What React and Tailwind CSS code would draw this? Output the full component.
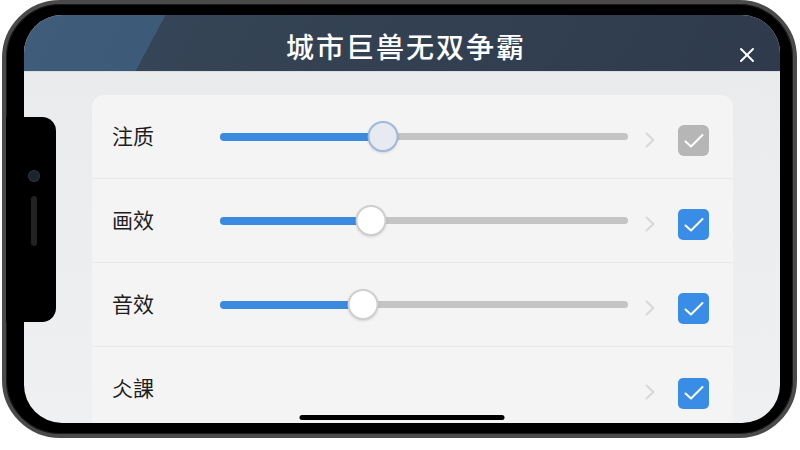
import { X } from 'lucide-react'

const rows = [
  { label: '注质', value: 40, active: true, checked: false },
  { label: '画效', value: 37, active: false, checked: true },
  { label: '音效', value: 35, active: false, checked: true },
  { label: '仌課', value: null, active: false, checked: true },
]

function Slider({ value, active }) {
  return (
    <div className="relative flex h-[30px] w-[408px] items-center">
      <div className="h-[7px] w-full rounded-full bg-[#c4c4c4]" />
      <div
        className="absolute left-0 h-[8px] rounded-full bg-[#3a8ae0]"
        style={{ width: `${value}%` }}
      />
      <div
        className={
          active
            ? 'absolute h-[31px] w-[31px] -translate-x-1/2 rounded-full border-2 border-[#9fb9d8] bg-[#e7ebf1] shadow-sm'
            : 'absolute h-[31px] w-[31px] -translate-x-1/2 rounded-full border-2 border-[#cfcfcf] bg-white shadow-sm'
        }
        style={{ left: `${value}%` }}
      />
    </div>
  )
}

function Check({ checked }) {
  return (
    <span
      className={
        checked
          ? 'grid h-[31px] w-[31px] translate-y-[4px] place-items-center rounded-[5px] bg-[#3a8de6]'
          : 'grid h-[31px] w-[31px] translate-y-[4px] place-items-center rounded-[6px] bg-[#b6b6b6]'
      }
    >
      <svg width="24" height="24" viewBox="0 0 24 24" fill="none">
        <path d="M3.5 12.5l5.5 5L20.5 6" stroke="white" strokeWidth="2" strokeLinecap="round" strokeLinejoin="round" />
      </svg>
    </span>
  )
}

function Row({ label, value, active, checked, last }) {
  return (
    <div className={last ? 'flex h-[84px] items-center pl-[20px] pr-[24px]' : 'flex h-[84px] items-center border-b border-[#e8e8e8] pl-[20px] pr-[24px]'}>
      <span className="w-[108px] -translate-y-[1px] text-[21px] text-[#1e1e1e]">{label}</span>
      {value !== null ? <Slider value={value} active={active} /> : <div className="w-[408px]" />}
      <svg className="ml-[17px] translate-y-[3px]" width="10" height="16" viewBox="0 0 10 16" fill="none">
        <path d="M1.5 1.5l7 6.5-7 6.5" stroke="#d6d6d6" strokeWidth="1.8" strokeLinecap="round" strokeLinejoin="round" />
      </svg>
      <div className="ml-[23px]">
        <Check checked={checked} />
      </div>
    </div>
  )
}

export default function App() {
  return (
    <div className="h-[450px] w-[800px] overflow-hidden bg-white font-['Noto_Sans_CJK_SC','Noto_Sans',sans-serif]">
      <div className="relative ml-[2px] h-[438px] w-[795px] rounded-[58px] border-[4px] border-[#4a4a4a] bg-black pb-[11px] pl-[18px] pr-[13px] pt-[11px] shadow-[inset_0_0_0_1px_#1a1a1a]">
        <div className="relative flex h-full flex-col overflow-hidden rounded-[38px] bg-[linear-gradient(180deg,#e8eaec,#eef0f1)]">
          <header className="relative flex h-[57px] shrink-0 items-center justify-center border-b border-[#d8dde2] bg-[linear-gradient(118deg,#3f5c7b_0%,#3d5a78_18%,#354456_18%,#2f3b4c_100%)] pt-[6px]">
            <h1 className="pl-[8px] text-[28px] font-medium leading-none tracking-[2px] text-white">城市巨兽无双争霸</h1>
            <X className="absolute right-[21px] top-[28px] text-white" size={24} strokeWidth={2} />
          </header>
          <div className="flex flex-1 flex-col pl-[68px] pr-[47px] pt-[23px]">
            <div className="flex-1 rounded-[12px] bg-[#f4f4f4]">
              {rows.map((r, i) => (
                <Row key={r.label} {...r} last={i === rows.length - 1} />
              ))}
            </div>
          </div>
          <div className="absolute bottom-[3px] left-1/2 h-[5px] w-[205px] -translate-x-1/2 rounded-full bg-black" />
        </div>
        {/* left notch with camera and speaker */}
        <div className="absolute left-0 top-[113px] h-[205px] w-[50px] rounded-r-[14px] bg-black">
          <div className="absolute left-[23px] top-[54px] h-[10px] w-[10px] rounded-full bg-[#1c2430] ring-1 ring-[#2b3442]" />
          <div className="absolute left-[25px] top-[79px] h-[50px] w-[6px] rounded-full bg-[#222]" />
        </div>
      </div>
    </div>
  )
}
